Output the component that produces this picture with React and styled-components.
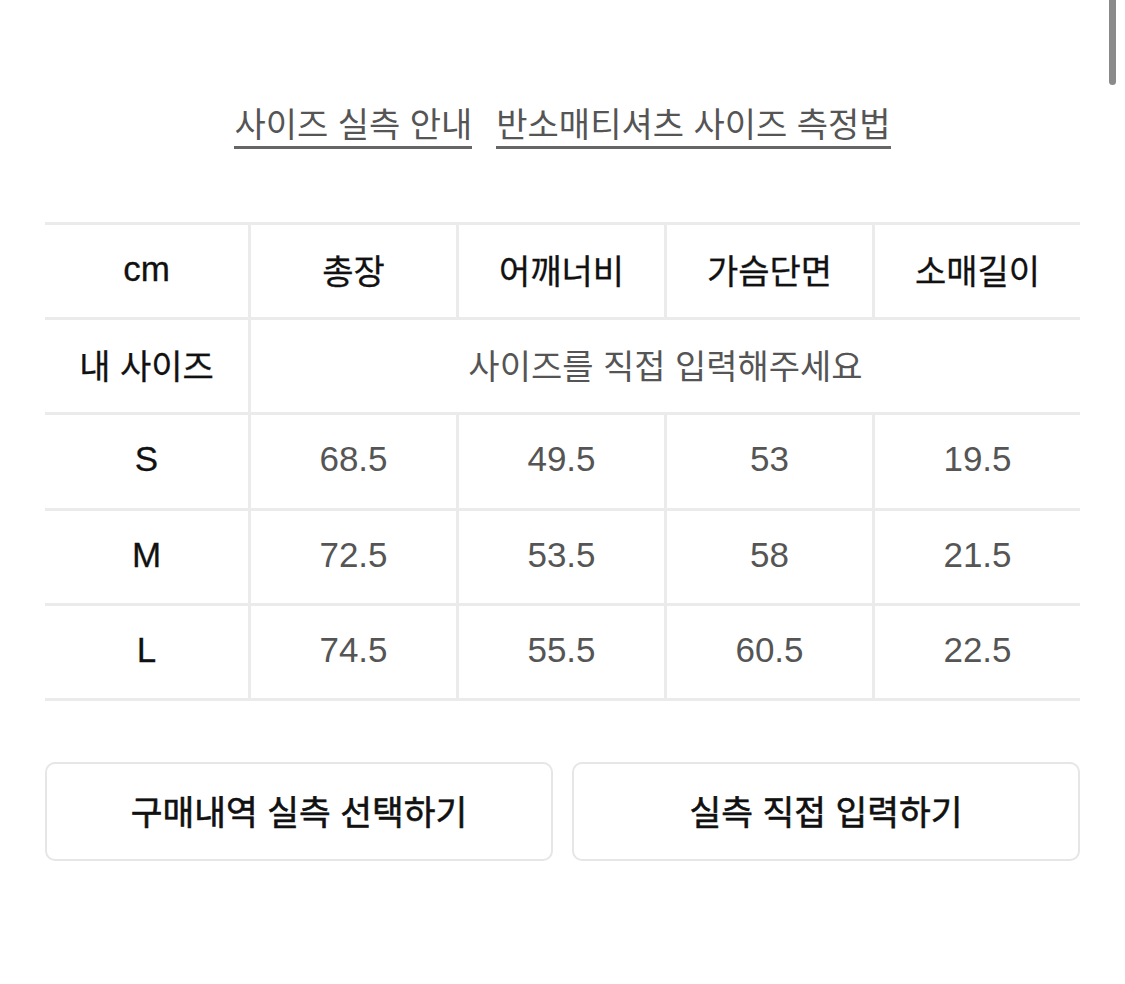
import React from 'react'
import styled, { createGlobalStyle } from 'styled-components'

const GlobalStyle = createGlobalStyle`
    html, body {
        margin: 0;
        padding: 0;
        background: #ffffff;
    }
    body {
        font-family: "Liberation Sans", "Noto Sans CJK KR", sans-serif;
        color: #111;
    }
`

const Page = styled.div`
    width: 1125px;
    min-height: 984px;
    box-sizing: border-box;
    padding: 104px 45px 0 45px;
    position: relative;
`

const ScrollThumb = styled.div`
    position: absolute;
    top: 0;
    left: 1109px;
    width: 7px;
    height: 85px;
    border-radius: 0 0 4px 4px;
    background: #8a8a8a;
`

const LinkRow = styled.div`
    display: flex;
    justify-content: center;
    gap: 24px;
    height: 118px;
`

const GuideLink = styled.a`
    font-size: 34px;
    line-height: 42px;
    height: 42px;
    color: #555;
    text-decoration: none;
    border-bottom: 3px solid #666;
`

const Table = styled.div`
    display: grid;
    grid-template-columns: 203px repeat(4, 1fr);
    grid-auto-rows: 95.2px;
    border-bottom: 3px solid #ebebeb;
`

const Cell = styled.div`
    box-sizing: border-box;
    display: flex;
    align-items: center;
    justify-content: center;
    border-top: 3px solid #ebebeb;
    border-left: ${p => (p.$first ? 'none' : '3px solid #ebebeb')};
    font-size: ${p => (p.$num ? '35px' : '34px')};
    color: ${p => (p.$muted ? '#555' : '#111')};
    -webkit-text-stroke: ${p => (p.$muted ? '0' : '0.3px')};
    grid-column: ${p => p.$span || 'auto'};
    padding-bottom: 4px;
`

const Buttons = styled.div`
    display: grid;
    grid-template-columns: 1fr 1fr;
    gap: 19px;
    margin-top: 61px;
`

const Button = styled.button`
    height: 99px;
    box-sizing: border-box;
    background: #fff;
    border: 2px solid #e6e6e6;
    border-radius: 10px;
    font-family: "Liberation Sans", "Noto Sans CJK KR", sans-serif;
    font-size: 34.5px;
    font-weight: 400;
    -webkit-text-stroke: 0.6px #111;
    color: #111;
    padding-bottom: 4px;
`

const headers = ['총장', '어깨너비', '가슴단면', '소매길이']

const sizes = [
    { name: 'S', values: ['68.5', '49.5', '53', '19.5'] },
    { name: 'M', values: ['72.5', '53.5', '58', '21.5'] },
    { name: 'L', values: ['74.5', '55.5', '60.5', '22.5'] },
]

export default function App() {
    return (
        <Page>
            <GlobalStyle />
            <ScrollThumb />
            <LinkRow>
                <GuideLink href="#">사이즈 실측 안내</GuideLink>
                <GuideLink href="#">반소매티셔츠 사이즈 측정법</GuideLink>
            </LinkRow>

            <Table>
                <Cell $first $num>cm</Cell>
                {headers.map(h => (
                    <Cell key={h}>{h}</Cell>
                ))}

                <Cell $first>내 사이즈</Cell>
                <Cell $span="span 4" $muted>사이즈를 직접 입력해주세요</Cell>

                {sizes.map(size => (
                    <React.Fragment key={size.name}>
                        <Cell $first $num>{size.name}</Cell>
                        {size.values.map((v, i) => (
                            <Cell key={i} $num $muted>{v}</Cell>
                        ))}
                    </React.Fragment>
                ))}
            </Table>

            <Buttons>
                <Button>구매내역 실측 선택하기</Button>
                <Button>실측 직접 입력하기</Button>
            </Buttons>
        </Page>
    )
}
